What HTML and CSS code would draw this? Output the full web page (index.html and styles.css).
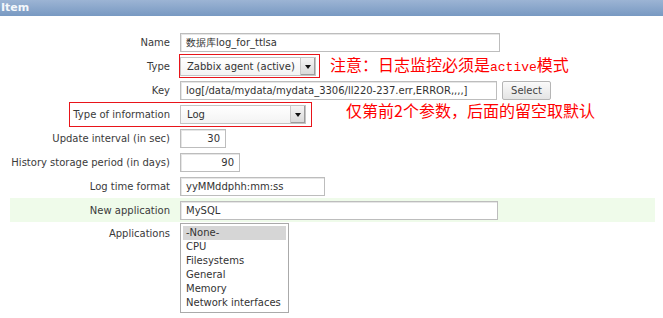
FILE: index.html
```html
<!DOCTYPE html>
<html lang="zh">
<head>
    <meta charset="UTF-8">
    <title>Item</title>
    <link rel="stylesheet" href="styles.css">
</head>
<body>
    <div class="panel">
        <div class="panel-title">Item</div>

        <div class="form">
            <div class="row">
                <span class="label">Name</span>
                <div class="field"><span class="input w-name">数据库log_for_ttlsa</span></div>
            </div>

            <div class="row">
                <span class="label">Type</span>
                <div class="field">
                    <div class="select w-type"><span class="select-text">Zabbix agent (active)</span><span class="select-btn"></span></div>
                    <span class="note note-type">注意：日志监控必须是<span class="latin">active</span>模式</span>
                </div>
            </div>

            <div class="row">
                <span class="label">Key</span>
                <div class="field">
                    <span class="input w-key">log[/data/mydata/mydata_3306/ll220-237.err,ERROR,,,,]</span>
                    <span class="button">Select</span>
                </div>
            </div>

            <div class="row">
                <span class="label">Type of information</span>
                <div class="field">
                    <div class="select w-info"><span class="select-text">Log</span><span class="select-btn"></span></div>
                    <span class="note note-info">仅第前2个参数，后面的留空取默认</span>
                </div>
            </div>

            <div class="row">
                <span class="label">Update interval (in sec)</span>
                <div class="field"><span class="input num w-interval">30</span></div>
            </div>

            <div class="row">
                <span class="label">History storage period (in days)</span>
                <div class="field"><span class="input num w-history">90</span></div>
            </div>

            <div class="row">
                <span class="label">Log time format</span>
                <div class="field"><span class="input w-logtime">yyMMddphh:mm:ss</span></div>
            </div>

            <div class="row row-new">
                <span class="label">New application</span>
                <div class="field"><span class="input w-newapp">MySQL</span></div>
            </div>

            <div class="row row-apps">
                <span class="label">Applications</span>
                <div class="field">
                    <ul class="listbox">
                        <li class="selected">-None-</li>
                        <li>CPU</li>
                        <li>Filesystems</li>
                        <li>General</li>
                        <li>Memory</li>
                        <li>Network interfaces</li>
                    </ul>
                </div>
            </div>

            <!-- red markers drawn over the form -->
            <div class="mark mark-type"></div>
            <div class="mark mark-info"></div>
        </div>
    </div>
</body>
</html>
```

FILE: styles.css
```css
* {
    margin: 0;
    padding: 0;
    box-sizing: border-box;
}

body {
    font-family: 'DejaVu Sans', Verdana, sans-serif;
    font-size: 10px;
    color: #333;
    background: #fff;
}

.panel {
    width: 663px;
    height: 318px;
    overflow: hidden;
}

.panel-title {
    height: 16px;
    line-height: 15px;
    padding-left: 1px;
    font-size: 11px;
    font-weight: bold;
    color: #f4f7fb;
    background: linear-gradient(#9cb4d4, #7899c2);
}

.form {
    position: relative;
    margin: 14px 8px 0 10px;
}

.row {
    display: grid;
    grid-template-columns: 160px 1fr;
    column-gap: 10px;
    height: 24px;
    align-items: center;
}

.row-new {
    background: #effbea;
}

.row-apps {
    height: auto;
    align-items: start;
}

.label {
    text-align: right;
    white-space: nowrap;
    color: #3a3a3a;
}

.row-apps .label {
    padding-top: 6px;
}

.field {
    display: flex;
    align-items: center;
}

.input {
    display: block;
    height: 19px;
    line-height: 17px;
    padding: 0 5px;
    border: 1px solid #bdbdbd;
    box-shadow: inset 1px 1px 0 #e6e6e6;
    background: #fff;
    white-space: nowrap;
    overflow: hidden;
}

.input.num {
    text-align: right;
}

.w-name { width: 320px; }
.w-key { width: 317px; }
.w-interval { width: 46px; }
.w-history { width: 60px; }
.w-logtime { width: 145px; }
.w-newapp { width: 318px; }

.select {
    display: flex;
    height: 19px;
    border: 1px solid #c4c4c4;
    background: linear-gradient(#fff, #f3f3f3);
}

.w-type { width: 136px; }
.w-info { width: 126px; }

.select-text {
    flex: 1;
    line-height: 17px;
    padding-left: 6px;
    white-space: nowrap;
}

.select-btn {
    position: relative;
    width: 15px;
    border-left: 1px solid #c8c8c8;
    background: linear-gradient(#f6f6f6, #d8d8d8);
    box-shadow: inset -1px -1px 0 #9c9c9c;
}

.select-btn::after {
    content: "";
    position: absolute;
    left: 4px;
    top: 7px;
    border-left: 3px solid transparent;
    border-right: 3px solid transparent;
    border-top: 4px solid #111;
}

.button {
    display: block;
    width: 49px;
    height: 19px;
    line-height: 17px;
    margin-left: 5px;
    text-align: center;
    border: 1px solid #b5b5b5;
    border-radius: 2px;
    background: linear-gradient(#fafafa, #e4e4e4);
    color: #444;
}

.note {
    font-family: 'Noto Sans CJK SC', sans-serif;
    font-size: 16px;
    line-height: 18px;
    color: #f00;
    white-space: nowrap;
}

.note .latin {
    font-family: 'Liberation Mono', monospace;
    font-size: 13px;
}

.note-type {
    margin-left: 14px;
}

.note-info {
    margin-left: 40px;
    margin-top: -9px;
}

.listbox {
    list-style: none;
    width: 109px;
    margin-top: 1px;
    padding: 2px;
    border: 1px solid #aaa;
    background: #fff;
}

.listbox li {
    height: 14px;
    line-height: 14px;
    padding-left: 3px;
    white-space: nowrap;
}

.listbox .selected {
    background: #d6d6d6;
}

.mark {
    position: absolute;
    border: 1px solid #e8141a;
}

.mark-type {
    left: 169px;
    top: 24px;
    width: 141px;
    height: 24px;
}

.mark-info {
    left: 59px;
    top: 72px;
    width: 243px;
    height: 25px;
}
```
